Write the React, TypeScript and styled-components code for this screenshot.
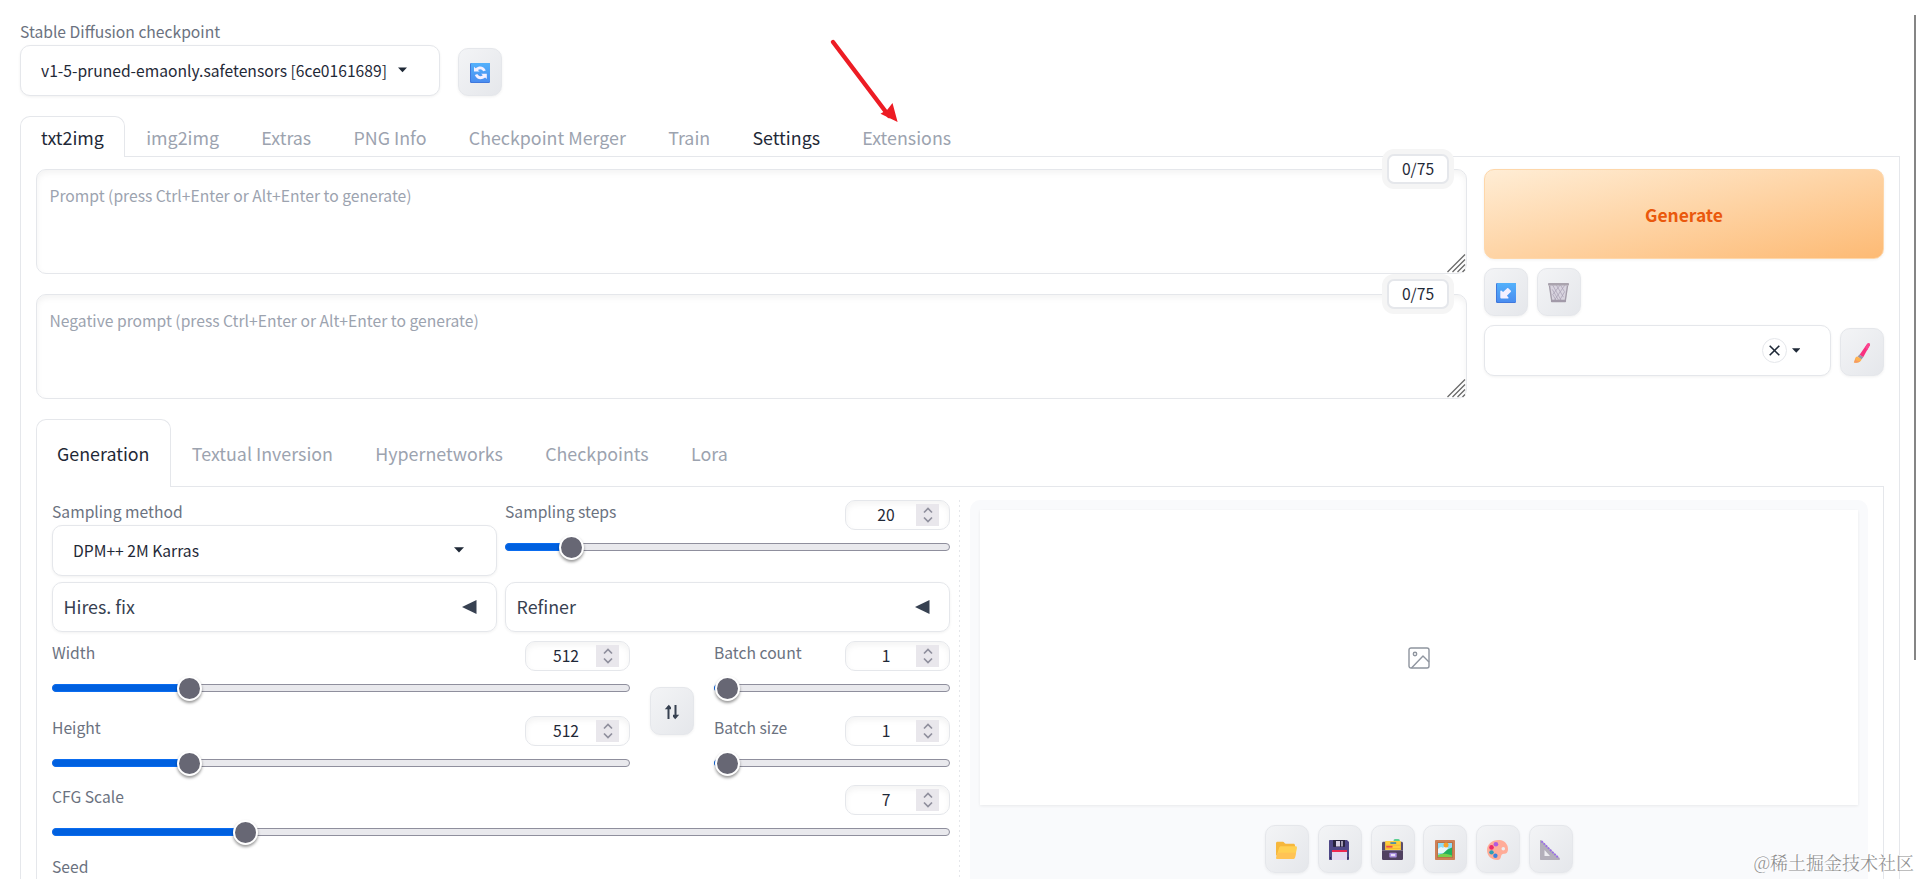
import React from 'react';
import styled, { createGlobalStyle, css } from 'styled-components';

const line = '#e5e7eb';
const ink = '#1f2937';
const muted = '#9ca3af';
const labelInk = '#6b7280';
const small = '15.66px';
const large = '17.85px';

const GlobalStyle = createGlobalStyle`
  *, *::before, *::after { box-sizing: border-box; }
  body {
    margin: 0;
    background: #fff;
    color: ${ink};
    font-family: "Noto Sans CJK SC", "Noto Sans", sans-serif;
    font-size: ${small};
    line-height: 25px;
    overflow: hidden;
  }
`;

const Page = styled.main`
  position: relative;
  height: 879px;
  padding: 20px 20px 0;
  overflow: hidden;
`;

const QuickSettings = styled.header`
  display: flex;
  align-items: flex-end;
  gap: 18px;
  height: 76px;
  margin-bottom: 20px;
`;

const Field = styled.div<{ $width?: number }>`
  display: flex;
  flex-direction: column;
  width: ${p => (p.$width ? `${p.$width}px` : 'auto')};
`;

const Label = styled.span`
  height: 25px;
  line-height: 24px;
  color: ${labelInk};
  white-space: nowrap;
`;

const Select = styled.div<{ $spread?: boolean }>`
  display: flex;
  align-items: center;
  justify-content: ${p => (p.$spread ? 'space-between' : 'flex-start')};
  gap: 11px;
  width: 100%;
  height: 51px;
  padding: 0 32px 1px 20px;
  border: 1px solid ${line};
  border-radius: 10px;
  background: #fff;
  box-shadow: 0 1px 3px rgba(0, 0, 0, 0.06);
  line-height: 23px;
  white-space: nowrap;
`;

const SelectEnd = styled.span`
  display: flex;
  align-items: center;
  gap: 5px;
  margin-left: auto;
  margin-right: -2px;
  padding-top: 1px;
`;

const ClearButton = styled.span`
  display: flex;
  align-items: center;
  justify-content: center;
  width: 25px;
  height: 25px;
  border: 1px solid ${line};
  border-radius: 50%;
`;

const ToolButton = styled.button`
  display: flex;
  flex: none;
  align-items: center;
  justify-content: center;
  width: 44px;
  height: 48px;
  padding: 1px 1px 0 0;
  border: 1px solid ${line};
  border-radius: 10px;
  background: linear-gradient(to bottom right, #f3f4f6, #e5e7eb);
  box-shadow: 0 1px 3px rgba(0, 0, 0, 0.06);
`;

const TabBar = styled.nav<{ $tall?: boolean }>`
  display: flex;
  height: ${p => (p.$tall ? 68 : 41)}px;
  box-shadow: inset 0 -1px 0 ${line};
`;

const Tab = styled.a<{ $active?: boolean; $dark?: boolean }>`
  display: flex;
  align-items: center;
  margin-right: 0.25px;
  padding: 0 20px;
  border: 1px solid transparent;
  border-bottom: 0;
  border-radius: 10px 10px 0 0;
  color: ${p => (p.$active || p.$dark ? ink : muted)};
  font-size: ${large};
  white-space: nowrap;
  ${p => p.$active && css`
    border-color: ${line};
    background: #fff;
  `}
`;

const MainPanel = styled.section`
  height: 740px;
  padding: 12px 15px 0;
  border: solid ${line};
  border-width: 0 1px;
`;

const PromptArea = styled.div`
  display: grid;
  grid-template-columns: 1431px 400px;
  gap: 17px;
  height: 230px;
  margin-bottom: 20px;
`;

const Prompts = styled.div`
  display: flex;
  flex-direction: column;
  gap: 20px;
`;

const PromptBox = styled.div`
  position: relative;
  height: 105px;
  padding: 13px 12.5px;
  border: 1px solid ${line};
  border-radius: 10px;
  box-shadow: inset 0 3px 6px rgba(0, 0, 0, 0.05);
  color: ${muted};
`;

const Grip = styled.svg`
  position: absolute;
  right: 0;
  bottom: 0;
`;

const Counter = styled.span`
  position: absolute;
  top: -16px;
  right: 17px;
  width: 62px;
  height: 30px;
  border: 2px solid ${line};
  border-radius: 7px;
  background: #fff;
  box-shadow: 0 0 0 5px #f5f5f5;
  color: ${ink};
  line-height: 25px;
  text-align: center;
`;

const Actions = styled.div`
  display: flex;
  flex-direction: column;
  gap: 9px;
`;

const GenerateButton = styled.button`
  height: 90px;
  padding: 0;
  border: 1px solid #fed7aa;
  border-radius: 10px;
  background: linear-gradient(to bottom right, #ffedd5, #fdba74);
  box-shadow: 0 1px 3px rgba(0, 0, 0, 0.06);
  color: #ea580c;
  font: 700 17.4px "Noto Sans CJK SC", sans-serif;
`;

const ActionRow = styled.div`
  display: flex;
  align-items: flex-end;
  gap: 9px;
`;

const GenerationPanel = styled.section`
  display: grid;
  grid-template-columns: 898px 20px 898px;
  height: 420px;
  padding: 13px 15px 0;
  border: solid ${line};
  border-width: 0 1px;
`;

const Settings = styled.div`
  display: flex;
  flex-direction: column;
`;

const Pair = styled.div`
  display: grid;
  grid-template-columns: 1fr 1fr;
  gap: 8px;
`;

const SamplingRow = styled(Pair)`
  height: 82px;
`;

const AccordionRow = styled(Pair)`
  height: 59px;
`;

const Accordion = styled.div`
  display: flex;
  align-items: center;
  justify-content: space-between;
  height: 50px;
  padding: 0 19px 1px 10.5px;
  border: 1px solid ${line};
  border-radius: 10px;
  box-shadow: 0 1px 3px rgba(0, 0, 0, 0.06);
  color: #374151;
  font-size: ${large};
`;

const SizeRow = styled.div`
  display: grid;
  grid-template-columns: 578px 44px 236px;
  column-gap: 20px;
  height: 144px;
`;

const Stack = styled.div`
  display: grid;
  grid-template-rows: 75px 69px;
`;

const SwapSlot = styled.div`
  padding-top: 46px;
`;

const ScaleRow = styled.div`
  height: 70px;
`;

const SliderHead = styled.div`
  display: flex;
  justify-content: space-between;
  height: 43px;
`;

const NumberBox = styled.div`
  display: flex;
  align-items: center;
  width: 105px;
  height: 30px;
  padding: 0 10px;
  border: 1px solid ${line};
  border-radius: 10px;
  box-shadow: inset 0 3px 6px rgba(0, 0, 0, 0.05);
`;

const NumberText = styled.span`
  flex: 1;
  text-align: center;
  line-height: 26px;
`;

const Spinner = styled.span`
  display: flex;
  align-items: center;
  justify-content: center;
  width: 23px;
  height: 22px;
  background: #e9e7ec;
`;

const Track = styled.div`
  position: relative;
  height: 8px;
  border: 1px solid #8f8f9d;
  border-radius: 4px;
  background: #e9e9ed;
`;

const Fill = styled.div`
  height: 8px;
  margin: -1px 0 0 -1px;
  border: 1px solid #0a6cf0;
  border-radius: 4px 0 0 4px;
  background: #0060df;
`;

const Thumb = styled.span`
  position: absolute;
  top: -9px;
  width: 25px;
  height: 25px;
  margin-left: -13px;
  border: 2px solid #fff;
  border-radius: 50%;
  background: #676774;
  box-shadow: 0 2px 3px rgba(0, 0, 0, 0.4);
`;

const Divider = styled.div`
  justify-self: center;
  width: 1px;
  margin-right: 2px;
  background: repeating-linear-gradient(to bottom, ${line} 0 2px, transparent 2px 5px);
`;

const Gallery = styled.div`
  display: flex;
  flex-direction: column;
  gap: 20px;
  padding: 10px 10px 0;
  border-radius: 10px 10px 0 0;
  background: #f9fafc;
`;

const Preview = styled.div`
  display: flex;
  align-items: center;
  justify-content: center;
  height: 295px;
  background: #fff;
  box-shadow: 0 1px 3px rgba(0, 0, 0, 0.07);
`;

const GalleryTools = styled.div`
  display: flex;
  justify-content: center;
  gap: 8.8px;
`;

const PointerArrow = styled.svg`
  position: absolute;
  left: 828px;
  top: 36px;
`;

const ScrollThumb = styled.div`
  position: absolute;
  top: 15px;
  right: 4px;
  width: 2px;
  height: 645px;
  background: #858585;
`;

const Watermark = styled.div`
  position: absolute;
  right: 6px;
  bottom: 4px;
  color: #8d8d8d;
  font-family: "Noto Serif CJK SC", "Noto Sans CJK SC", sans-serif;
  font-size: 18px;
  font-weight: 300;
  text-shadow: -1px -1px 0 #fff;
  white-space: nowrap;
`;

const Icon = ({ children, size = 20 }: { children: React.ReactNode; size?: number }) => (
  <svg width={size} height={size} viewBox="0 0 20 20" fill="none">{children}</svg>
);

const Caret = ({ width = 10 }: { width?: number }) => (
  <svg width={width} height={width * 0.6} viewBox="0 0 10 6"><path d="M0 .3h10L5 5.6z" fill={ink} /></svg>
);

const LeftTriangle = () => (
  <svg width="15" height="14" viewBox="0 0 15 14"><path d="M0 7 14.5 0v14z" fill="#374151" /></svg>
);

const BlueTile = ({ id, children }: { id: string; children: React.ReactNode }) => (
  <Icon>
    <defs>
      <linearGradient id={id} x1="0" y1="0" x2="0" y2="1">
        <stop stopColor="#53b1fb" />
        <stop offset="1" stopColor="#4a8df0" />
      </linearGradient>
    </defs>
    <rect width="20" height="20" rx="1.2" fill="#3f78dd" />
    <rect x="1" width="19" height="19" rx="1" fill={`url(#${id})`} />
    {children}
  </Icon>
);

const RefreshIcon = () => (
  <BlueTile id="refresh-tile">
    <path d="M4 8.600V3.700l1.700 1.500C9.400 2.300 14 3.300 15.800 7.400l-2.600.9c-1.200-2.300-3.300-2.800-5.300-1.200l1.700 1.500z" fill="#f5f0ff" />
    <path d="M16.800 10.700v5.300l-1.700-1.500c-3.800 2.900-8.500 1.900-10.300-2.600l2.600-.8c1.200 2.300 3.300 2.900 5.400 1.200l-1.700-1.600z" fill="#f5f0ff" />
  </BlueTile>
);

const DownLeftIcon = () => (
  <BlueTile id="arrow-tile">
    <path d="M4.300 8.200c0-.7.800-1 1.300-.5l1.500 1.400 3.800-3.700c.5-.5 1.100-.5 1.600 0l2.200 2.100c.5.5.5 1.100 0 1.600l-3.800 3.700 1.400 1.400c.5.5.2 1.300-.5 1.300H5.200c-.5 0-.9-.4-.9-.9z" fill="#f5f0ff" />
  </BlueTile>
);

const TrashIcon = () => (
  <Icon size={21}>
    <path d="m1 2.500 2.200 16h13.600l2.200-16z" fill="#d8d4df" />
    <path d="m4.500 3 8 14.500M8 3l6.800 11.500M12 3l3.500 6M4 7l6.200 10.500M4.600 12l3 5.500M16 3 6 17.500M11.500 3l-7 9M16 9l-5 8.500" stroke="#a69eb3" strokeWidth=".65" />
    <path d="m1.400 3.500 2.200 14.700M18.600 3.500l-2.200 14.700" stroke="#a49daa" strokeWidth="1.300" />
    <rect y="1" width="20" height="2.300" rx=".8" fill="#aaa4ae" />
    <rect x="2.800" y="17" width="14.400" height="2.200" rx=".8" fill="#a29aa9" />
  </Icon>
);

const BrushIcon = () => (
  <Icon>
    <path d="m7.600 11.700 7.400-10.800c1.100-1.400 3.600-.4 2.800 1.400L11.200 14.200z" fill="#f9307f" />
    <path d="m13.300 4.200 2.400-3.700c1.500-.8 2.900.4 2.100 1.900l-2.700 4.800z" fill="#fb4590" />
    <path d="m7.400 11.400 3.800 2.900-1.800 2.200-3.700-2.900z" fill="#9b93a5" />
    <path d="M5.500 13.500c-3.200.5-2 3.500-3.700 6 3.700.6 7.600-.2 7.600-3.200z" fill="#ffb14e" />
    <path d="M2 19.500c.7-1.500.8-2.300 1.200-3.800.6 2 2.600 2.600 4.900 2.500-1.500 1.400-4 1.700-6.100 1.300z" fill="#f49a64" />
  </Icon>
);

const FolderIcon = () => (
  <Icon size={21}>
    <path d="M0 4c0-.9.600-1.400 1.500-1.400h5c1.200 0 1.600 1.900 3 1.900h7c1 0 1.600.6 1.600 1.500v10H1.500C.6 16 0 15.500 0 14.700z" fill="#f6b73c" />
    <path d="M1 19c-.7 0-1-.5-.9-1.100L2.900 8.500C3.200 7.500 3.900 7 4.900 7h13.700c1 0 1.500.7 1.300 1.700l-1.700 8.600c-.3 1.200-1 1.700-2.100 1.700z" fill="#ffd052" />
    <path d="M.4 17 1.600 13h17.500l-.9 4.300c-.3 1.200-1 1.700-2.100 1.700H1c-.6 0-1-.7-.6-2z" fill="#ffbe55" opacity=".7" />
  </Icon>
);

const FloppyIcon = () => (
  <Icon>
    <path d="M0 1c0-.6.400-1 1-1h17l2 2v17c0 .6-.4 1-1 1H1c-.6 0-1-.4-1-1z" fill="#4e4787" />
    <path d="M4 0h12v6c0 .6-.4 1-1 1H5c-.6 0-1-.4-1-1z" fill="#28233f" />
    <path d="M7 1h4v5.500H7z" fill="#d7cfe4" /><path d="M12 1h2v5.500h-2z" fill="#a099b0" />
    <path d="M3 10h15v10H3z" fill="#e3d8ef" /><path d="M3 10h15v2H3z" fill="#ee2650" />
    <path d="M1 17h1v2H1zM18.500 17h1v2h-1z" fill="#2b2650" />
  </Icon>
);

const CardBoxIcon = () => (
  <Icon size={21}>
    <path d="M11 2c0-1.200.5-2 1.500-2h3c1 0 1.500.8 1.500 2v2h-6z" fill="#58cf91" />
    <path d="M0 4c0-1 .5-1.500 1.500-1.500h17c1 0 1.500.5 1.500 1.500v7H0z" fill="#5b4d6c" />
    <path d="M3 3c0-.6.300-1 1-1h13c.6 0 1 .4 1 1v7.500H3z" fill="#ffcf3d" />
    <path d="M3 5.500h15v.6H3zM3 8.600h15v.6H3z" fill="#f2b230" />
    <path d="M8 3h5.500v1.700H8z" fill="#4c8ca8" />
    <path d="M4 6.500h6v1.700H4z" fill="#f14b4b" />
    <path d="M0 11h20v7.500c0 .9-.6 1.500-1.500 1.500h-17C.6 20 0 19.400 0 18.500z" fill="#504160" />
    <rect x="7" y="13" width="7" height="4.700" rx=".7" fill="#a98de0" /><path d="M8.500 14.300h4v2h-4z" fill="#e7def5" />
  </Icon>
);

const PictureIcon = () => (
  <Icon>
    <rect width="20" height="20" rx=".8" fill="#cf8157" />
    <path d="M2 2h16v16H2z" fill="#b8734a" /><path d="M3 3h14v14H3z" fill="#8edcfa" />
    <path d="M3 9c2-2 3-3 5-1 2-3 5-2 5 1l-4 4H3z" fill="#e6f7fb" />
    <path d="M17 7.500V17H4l8.500-7.500z" fill="#23b15d" />
    <path d="M3 15c4-2 9-1.500 14 .5V17H3z" fill="#77cf4d" />
    <circle cx="11" cy="5" r="2.500" fill="#f7a32b" />
  </Icon>
);

const PaletteIcon = () => (
  <Icon size={21}>
    <path d="M12 1C5 .5 0 5 0 10.500S4 20 10 20c4 0 2.700-4.500 4.500-5.500 1.800-1 5.500.5 5.500-5 0-5-4-8.200-8-8.500zm3.500 6.500a1.700 1.700 0 1 1 0 3.400 1.700 1.700 0 0 1 0-3.400z" fill="#ffac98" />
    <circle cx="8.500" cy="5" r="2.200" fill="#b15adf" /><circle cx="4.300" cy="8" r="2.200" fill="#ec2a68" />
    <circle cx="4.300" cy="12.700" r="2.100" fill="#2aa0b8" /><circle cx="8" cy="16" r="2.100" fill="#3f81df" />
  </Icon>
);

const RulerIcon = () => (
  <Icon>
    <path d="M0 .7C0 0 .9-.2 1.400.3l18.300 18c.6.6.2 1.700-.7 1.700H1c-.6 0-1-.4-1-1z" fill="#b3afba" />
    <path d="M4.500 10v6H10z" fill="#eeedf1" />
    <path d="m1.500 1.300 17.300 17" stroke="#9b6ee8" strokeWidth="1.900" strokeDasharray="1.800 1.200" />
  </Icon>
);

const SwapIcon = () => (
  <svg width="16" height="16" viewBox="0 0 16 16" fill="none">
    <path d="M4.500 15V2.500M11.500 1v12.500" stroke="#374151" strokeWidth="2" />
    <path d="M.8 5.200 4.800.7 7 3.300V5.200zM15.200 10.800l-4 4.500L9 12.700v-1.900z" fill="#374151" />
  </svg>
);

const ImageIcon = () => (
  <svg width="22" height="22" viewBox="0 0 22 22" fill="none" stroke="#8f959f" strokeWidth="1.400" strokeLinejoin="round">
    <rect x="1" y="1" width="20" height="20" rx="2" />
    <circle cx="7" cy="7" r="1.700" /><path d="m3.500 21 11.500-12 6 6" />
  </svg>
);

const Prompt = ({ text }: { text: string }) => (
  <PromptBox>
    {text}
    <Counter>0/75</Counter>
    <Grip width="19" height="19" viewBox="0 0 19 19" stroke="#6a6a6a" strokeWidth="1.300">
      <path d="M.5 18 18 .5M5.500 18 18 5.500M10.500 18l7.500-7.500M15.500 18l2.500-2.500" />
    </Grip>
  </PromptBox>
);

interface SliderProps { label: string; value: number; min: number; max: number }

const Slider = ({ label, value, min, max }: SliderProps) => {
  const ratio = (value - min) / (max - min);
  const position = `calc(12.5px + (100% - 25px) * ${ratio})`;
  return (
    <div>
      <SliderHead>
        <Label>{label}</Label>
        <NumberBox>
          <NumberText>{value}</NumberText>
          <Spinner>
            <svg width="10" height="16" viewBox="0 0 10 16" fill="none" stroke="#8f8f9d" strokeWidth="1.700">
              <path d="m1 5.500 4-4 4 4M1 10.500l4 4 4-4" />
            </svg>
          </Spinner>
        </NumberBox>
      </SliderHead>
      <Track>
        <Fill style={{ width: position }} />
        <Thumb style={{ left: position }} />
      </Track>
    </div>
  );
};

const mainTabs = ['txt2img', 'img2img', 'Extras', 'PNG Info', 'Checkpoint Merger', 'Train', 'Settings', 'Extensions'];
const networkTabs = ['Generation', 'Textual Inversion', 'Hypernetworks', 'Checkpoints', 'Lora'];
const galleryIcons = [FolderIcon, FloppyIcon, CardBoxIcon, PictureIcon, PaletteIcon, RulerIcon];

export default function App() {
  return (
    <>
      <GlobalStyle />
      <Page>
        <QuickSettings>
          <Field $width={420}>
            <Label>Stable Diffusion checkpoint</Label>
            <Select>v1-5-pruned-emaonly.safetensors [6ce0161689]<Caret /></Select>
          </Field>
          <ToolButton><RefreshIcon /></ToolButton>
        </QuickSettings>

        <TabBar>
          {mainTabs.map((name, i) => (
            <Tab key={name} $active={i === 0} $dark={name === 'Settings'}>{name}</Tab>
          ))}
        </TabBar>

        <MainPanel>
          <PromptArea>
            <Prompts>
              <Prompt text="Prompt (press Ctrl+Enter or Alt+Enter to generate)" />
              <Prompt text="Negative prompt (press Ctrl+Enter or Alt+Enter to generate)" />
            </Prompts>
            <Actions>
              <GenerateButton>Generate</GenerateButton>
              <ActionRow>
                <ToolButton><DownLeftIcon /></ToolButton>
                <ToolButton><TrashIcon /></ToolButton>
              </ActionRow>
              <ActionRow>
                <Select>
                  <SelectEnd>
                    <ClearButton>
                      <svg width="11" height="11" viewBox="0 0 11 11" stroke={ink} strokeWidth="1.600"><path d="m.7.7 9.600 9.600M10.300.7.7 10.300" /></svg>
                    </ClearButton>
                    <Caret width={8.5} />
                  </SelectEnd>
                </Select>
                <ToolButton><BrushIcon /></ToolButton>
              </ActionRow>
            </Actions>
          </PromptArea>

          <TabBar $tall>
            {networkTabs.map((name, i) => <Tab key={name} $active={i === 0}>{name}</Tab>)}
          </TabBar>

          <GenerationPanel>
            <Settings>
              <SamplingRow>
                <Field>
                  <Label>Sampling method</Label>
                  <Select $spread>DPM++ 2M Karras<Caret /></Select>
                </Field>
                <Slider label="Sampling steps" value={20} min={1} max={150} />
              </SamplingRow>
              <AccordionRow>
                <Accordion>Hires. fix<LeftTriangle /></Accordion>
                <Accordion>Refiner<LeftTriangle /></Accordion>
              </AccordionRow>
              <SizeRow>
                <Stack>
                  <Slider label="Width" value={512} min={64} max={2048} />
                  <Slider label="Height" value={512} min={64} max={2048} />
                </Stack>
                <SwapSlot><ToolButton><SwapIcon /></ToolButton></SwapSlot>
                <Stack>
                  <Slider label="Batch count" value={1} min={1} max={100} />
                  <Slider label="Batch size" value={1} min={1} max={8} />
                </Stack>
              </SizeRow>
              <ScaleRow>
                <Slider label="CFG Scale" value={7} min={1} max={30} />
              </ScaleRow>
              <Label>Seed</Label>
            </Settings>
            <Divider />
            <Gallery>
              <Preview><ImageIcon /></Preview>
              <GalleryTools>
                {galleryIcons.map((Glyph, i) => <ToolButton key={i}><Glyph /></ToolButton>)}
              </GalleryTools>
            </Gallery>
          </GenerationPanel>
        </MainPanel>

        <PointerArrow width="74" height="90" viewBox="0 0 74 90">
          <path d="m5 6 56 74" stroke="#ed1c24" strokeWidth="4.400" strokeLinecap="round" />
          <path d="M69.600 86 64.500 67l-5 6.500-7 4.300z" fill="#ed1c24" />
        </PointerArrow>
        <ScrollThumb />
        <Watermark>@稀土掘金技术社区</Watermark>
      </Page>
    </>
  );
}
